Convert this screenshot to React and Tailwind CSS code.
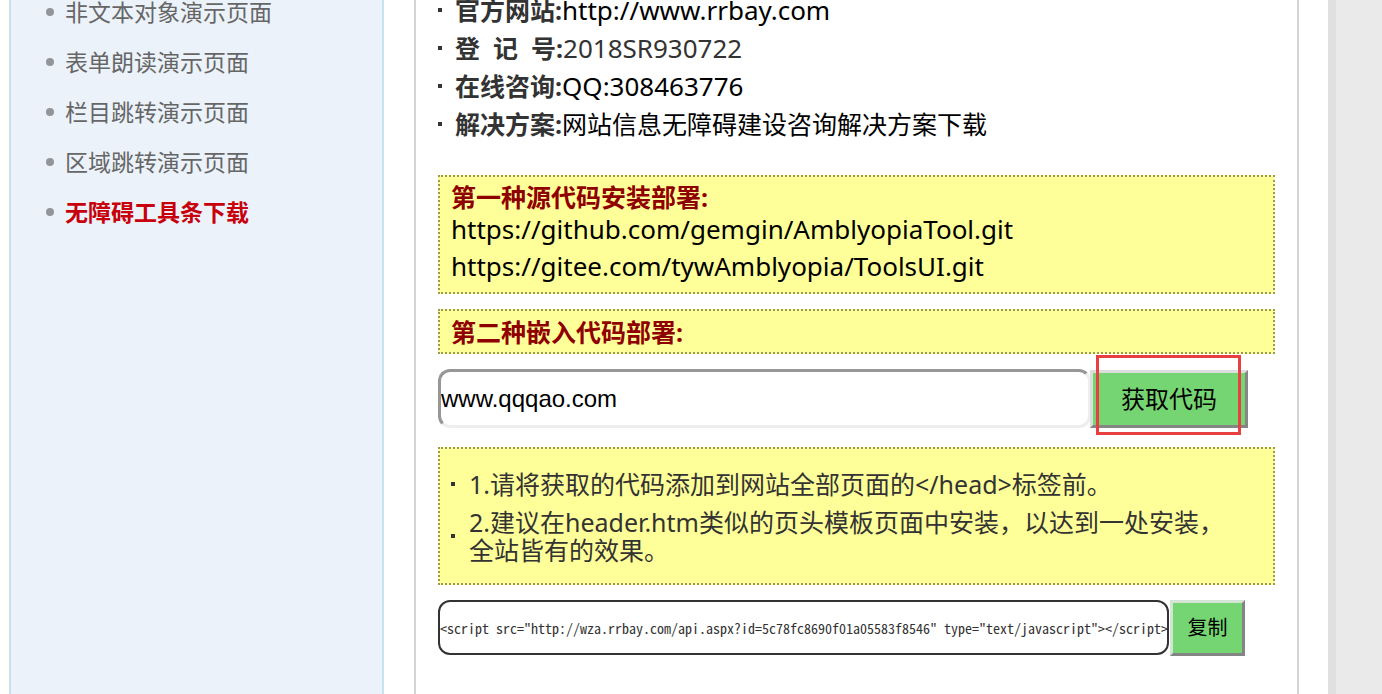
const demoPages = [
  "非文本对象演示页面",
  "表单朗读演示页面",
  "栏目跳转演示页面",
  "区域跳转演示页面",
];

function Dot() {
  return <span className="h-2 w-2 shrink-0 rounded-full bg-[#939598]" />;
}

function Square() {
  return <span className="h-1 w-1 shrink-0 bg-[#333333]" />;
}

function Sidebar() {
  return (
    <nav className="w-[375px] shrink-0 overflow-hidden border-x-2 border-[#c9e1ef] bg-[#ebf2fa] pl-[35px] text-[23px] text-[#666666]">
      <ul className="-mt-[13px]">
        {demoPages.map((name) => (
          <li key={name} className="flex h-[50px] items-center gap-[11px]">
            <Dot />
            <a href="#demo">{name}</a>
          </li>
        ))}
        <li className="flex h-[50px] items-center gap-[11px]">
          <Dot />
          <a href="#download" className="font-bold text-[#c7000b]">
            无障碍工具条下载
          </a>
        </li>
      </ul>
    </nav>
  );
}

function InfoRow({ label, children }) {
  return (
    <li className="flex h-[38px] items-center whitespace-pre">
      <Square />
      <strong className="ml-[13px] text-[#333333]">{label}</strong>
      {children}
    </li>
  );
}

export default function App() {
  return (
    <div className="min-h-screen overflow-hidden bg-[#eaeaea] pr-[46px] font-['Noto_Sans','Noto_Sans_CJK_SC',sans-serif] text-[25px] leading-7 text-black">
      <div className="flex min-h-screen gap-[30px] border-r-8 border-[#e0e0e0] bg-white pr-[29px] pl-[9px]">
        <Sidebar />
        <main className="min-w-0 flex-1 overflow-hidden border-x-2 border-[#d4d4d4] px-[22px]">
          <ul className="-mt-[9px]">
            <InfoRow label="官方网站:">
              <a href="http://www.rrbay.com" className="text-[26px]">http://www.rrbay.com</a>
            </InfoRow>
            <InfoRow label="登  记  号:">
              <span className="text-[26px] text-[#333333]">2018SR930722</span>
            </InfoRow>
            <InfoRow label="在线咨询:">
              <a href="#qq" className="text-[26px]">QQ:308463776</a>
            </InfoRow>
            <InfoRow label="解决方案:">
              <a href="#solution">网站信息无障碍建设咨询解决方案下载</a>
            </InfoRow>
          </ul>

          <section className="mt-8 h-[119px] border-2 border-dotted border-[#9a9a5a] bg-[#ffff99] px-[11px] pt-[6px]">
            <h2 className="font-bold text-[#8f0000]">第一种源代码安装部署:</h2>
            <p className="text-[26px] leading-[37px]">
              <a href="https://github.com/gemgin/AmblyopiaTool.git" className="block">
                https://github.com/gemgin/AmblyopiaTool.git
              </a>
              <a href="https://gitee.com/tywAmblyopia/ToolsUI.git" className="block">
                https://gitee.com/tywAmblyopia/ToolsUI.git
              </a>
            </p>
          </section>

          <section className="mt-[15px] flex h-[45px] items-center border-2 border-dotted border-[#9a9a5a] bg-[#ffff99] px-[11px]">
            <h2 className="font-bold text-[#8f0000]">第二种嵌入代码部署:</h2>
          </section>

          <form className="mt-[15px] flex items-end pr-[27px]" onSubmit={(e) => e.preventDefault()}>
            <input
              type="text"
              aria-label="网站域名"
              defaultValue="www.qqqao.com"
              className="h-[59px] min-w-0 flex-1 rounded-[12px] border-[3px] border-t-[#979797] border-r-[#eeeeee] border-b-[#eeeeee] border-l-[#979797] bg-white font-['Liberation_Sans',sans-serif] text-[24px]"
            />
            <div className="relative -ml-px">
              <button
                type="submit"
                className="block h-[58px] w-[158px] border-[3px] border-t-[#dddddd] border-r-[#858585] border-b-[#858585] border-l-[#dddddd] bg-[#75d572] text-[24px]"
              >
                获取代码
              </button>
              <div className="pointer-events-none absolute -top-[15px] right-[7px] -bottom-[7px] left-[6px] border-[3px] border-[#e84040]" />
            </div>
          </form>

          <ul className="mt-[19px] flex h-[138px] flex-col gap-[10px] border-2 border-dotted border-[#9a9a5a] bg-[#ffff99] pt-[21px] pr-[30px] pl-[11px] text-[#333333]">
            <li className="flex items-center gap-[14px]">
              <Square />
              <span>1.请将获取的代码添加到网站全部页面的&lt;/head&gt;标签前。</span>
            </li>
            <li className="flex items-center gap-[14px]">
              <Square />
              <span>
                2.建议在header.htm类似的页头模板页面中安装，以达到一处安装，
                <br />
                全站皆有的效果。
              </span>
            </li>
          </ul>

          <div className="mt-[15px] flex gap-px pr-[30px]">
            <code className="flex h-[55px] min-w-0 flex-1 items-center overflow-hidden rounded-[12px] border-2 border-[#333333] font-['Noto_Sans_Mono_CJK_SC','Liberation_Mono',monospace] text-[14px] whitespace-nowrap text-[#333333]">
              {'<script src="http://wza.rrbay.com/api.aspx?id=5c78fc8690f01a05583f8546" type="text/javascript"></script>'}
            </code>
            <button
              type="button"
              className="h-14 w-[75px] border-[3px] border-t-[#d5e5d5] border-r-[#858585] border-b-[#858585] border-l-[#d5e5d5] bg-[#75d572] text-[20px]"
            >
              复制
            </button>
          </div>
        </main>
      </div>
    </div>
  );
}
